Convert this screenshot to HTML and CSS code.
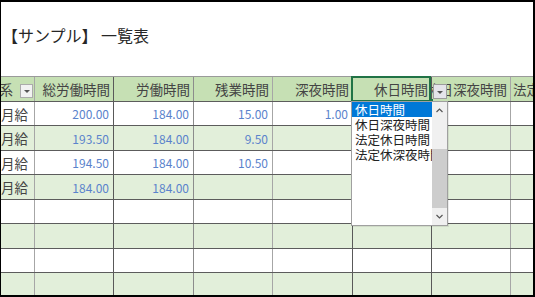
FILE: index.html
```html
<!DOCTYPE html>
<html lang="ja">
<head>
    <meta charset="UTF-8">
    <meta name="viewport" content="width=device-width, initial-scale=1.0">
    <title>【サンプル】 一覧表</title>
    <link rel="stylesheet" href="styles.css">
</head>
<body>
    <div class="sheet">
        <div class="sheet-title">【サンプル】 一覧表</div>

        <div class="grid">
            <!-- header row -->
            <div class="row head">
                <div class="cell first-head">給与体系<span class="drop-btn"></span></div>
                <div class="cell">総労働時間</div>
                <div class="cell">労働時間</div>
                <div class="cell">残業時間</div>
                <div class="cell">深夜時間</div>
                <div class="cell active">
                    休日時間
                    <div class="pick-list">
                        <ul class="pick-options">
                            <li class="picked">休日時間</li>
                            <li>休日深夜時間</li>
                            <li>法定休日時間</li>
                            <li>法定休深夜時間</li>
                        </ul>
                        <div class="pick-scroll">
                            <span class="scroll-arrow">
                                <svg width="7" height="5" viewBox="0 0 7 5"><polyline points="0.5,4 3.5,1 6.5,4" fill="none" stroke="#555" stroke-width="1.2"/></svg>
                            </span>
                            <span class="scroll-gap"></span>
                            <span class="scroll-thumb"></span>
                            <span class="scroll-arrow">
                                <svg width="7" height="5" viewBox="0 0 7 5"><polyline points="0.5,1 3.5,4 6.5,1" fill="none" stroke="#555" stroke-width="1.2"/></svg>
                            </span>
                        </div>
                    </div>
                </div>
                <div class="cell next-head">休日深夜時間<span class="drop-btn"></span></div>
                <div class="cell last-head">法定休日時間</div>
            </div>

            <!-- data rows -->
            <div class="row">
                <div class="cell text">月給</div>
                <div class="cell num">200.00</div>
                <div class="cell num">184.00</div>
                <div class="cell num">15.00</div>
                <div class="cell num">1.00</div>
                <div class="cell"></div>
                <div class="cell"></div>
                <div class="cell"></div>
            </div>
            <div class="row">
                <div class="cell text">月給</div>
                <div class="cell num">193.50</div>
                <div class="cell num">184.00</div>
                <div class="cell num">9.50</div>
                <div class="cell"></div>
                <div class="cell"></div>
                <div class="cell"></div>
                <div class="cell"></div>
            </div>
            <div class="row">
                <div class="cell text">月給</div>
                <div class="cell num">194.50</div>
                <div class="cell num">184.00</div>
                <div class="cell num">10.50</div>
                <div class="cell"></div>
                <div class="cell"></div>
                <div class="cell"></div>
                <div class="cell"></div>
            </div>
            <div class="row">
                <div class="cell text">月給</div>
                <div class="cell num">184.00</div>
                <div class="cell num">184.00</div>
                <div class="cell"></div>
                <div class="cell"></div>
                <div class="cell"></div>
                <div class="cell"></div>
                <div class="cell"></div>
            </div>
            <div class="row">
                <div class="cell"></div><div class="cell"></div><div class="cell"></div><div class="cell"></div>
                <div class="cell"></div><div class="cell"></div><div class="cell"></div><div class="cell"></div>
            </div>
            <div class="row">
                <div class="cell"></div><div class="cell"></div><div class="cell"></div><div class="cell"></div>
                <div class="cell"></div><div class="cell"></div><div class="cell"></div><div class="cell"></div>
            </div>
            <div class="row">
                <div class="cell"></div><div class="cell"></div><div class="cell"></div><div class="cell"></div>
                <div class="cell"></div><div class="cell"></div><div class="cell"></div><div class="cell"></div>
            </div>
            <div class="row">
                <div class="cell"></div><div class="cell"></div><div class="cell"></div><div class="cell"></div>
                <div class="cell"></div><div class="cell"></div><div class="cell"></div><div class="cell"></div>
            </div>
        </div>
    </div>
</body>
</html>
```

FILE: styles.css
```css
* {
    margin: 0;
    padding: 0;
    box-sizing: border-box;
    font-family: "Noto Sans CJK JP", "Noto Sans", sans-serif;
}

body {
    background-color: #fff;
}

.sheet {
    width: 535px;
    height: 297px;
    overflow: hidden;
    border-top: 2px solid #000;
    border-left: 1px solid #000;
    border-right: 2px solid #000;
    border-bottom: 2px solid #000;
    background-color: #fff;
}

.sheet-title {
    height: 74px;
    display: flex;
    align-items: center;
    padding-left: 1px;
    padding-bottom: 8px;
    font-size: 16px;
    color: #262626;
    white-space: nowrap;
}

.grid {
    border-top: 1px solid #9a9a9a;
}

.row {
    display: grid;
    grid-template-columns: 34px 79px 80px 79px 80px 79px 79px 79px;
    height: 24px;
    border-bottom: 1px solid #5c5c5c;
    background-color: #fff;
}

.row:nth-child(odd) {
    background-color: #e2efda;
}

.row:nth-child(3),
.row:nth-child(5),
.row:nth-child(7) {
    height: 25px;
}

.row.head {
    height: 25px;
    background-color: #c6e0b4;
}

.cell {
    position: relative;
    display: flex;
    align-items: center;
    justify-content: flex-end;
    overflow: hidden;
    white-space: nowrap;
    padding: 0 3px;
    border-right: 1px solid #595959;
    font-size: 13.5px;
    color: #444;
}

.cell:nth-child(1),
.cell:nth-child(4),
.cell:nth-child(7) {
    border-right-color: #a6a6a6;
}

.cell:nth-child(3) {
    border-right-color: #8c8c8c;
}

.cell.text {
    justify-content: flex-start;
    padding: 0;
}

.cell.num {
    padding-right: 4px;
    font-size: 12px;
    color: #5a83cc;
}

.first-head {
    padding-right: 21px;
}

.last-head {
    justify-content: flex-start;
    padding-left: 2px;
}

/* dropdown buttons in the header */
.drop-btn {
    position: absolute;
    top: 7px;
    width: 13px;
    height: 15px;
    background-color: #f2f2f2;
    border: 1px solid #ababab;
    display: flex;
    justify-content: center;
    align-items: center;
}

.drop-btn::after {
    content: "";
    border-left: 3px solid transparent;
    border-right: 3px solid transparent;
    border-top: 3px solid #555;
    margin-top: 1px;
}

.first-head .drop-btn {
    right: 1px;
    height: 14px;
}

.next-head .drop-btn {
    left: 1px;
    width: 14px;
    background-color: #e4e4ea;
    border-color: #9c9c9c;
}

/* selected header cell */
.cell.active {
    overflow: visible;
    z-index: 2;
}

.cell.active::after {
    content: "";
    position: absolute;
    left: -2px;
    right: 0;
    top: -1px;
    bottom: -1px;
    border: 2px solid #217346;
}

.cell.active::before {
    content: "";
    position: absolute;
    right: -2px;
    bottom: -2px;
    width: 4px;
    height: 4px;
    background-color: #217346;
    z-index: 3;
}

/* validation list */
.pick-list {
    position: absolute;
    left: -2px;
    top: 24px;
    width: 97px;
    height: 125px;
    display: flex;
    background-color: #fff;
    border: 1px solid #a0a0a0;
    box-shadow: 1px 1px 0 rgba(0, 0, 0, 0.08);
    z-index: 4;
}

.pick-options {
    list-style: none;
    width: 80px;
    overflow: hidden;
}

.pick-options li {
    height: 15px;
    line-height: 15px;
    padding-left: 3px;
    font-size: 12.5px;
    color: #222;
    white-space: nowrap;
    overflow: hidden;
}

.pick-options li.picked {
    background-color: #0078d7;
    color: #fff;
}

.pick-scroll {
    width: 15px;
    display: flex;
    flex-direction: column;
    background-color: #f0f0f0;
}

.scroll-arrow {
    height: 17px;
    display: flex;
    justify-content: center;
    align-items: center;
}

.scroll-gap {
    height: 30px;
}

.scroll-thumb {
    flex: 1;
    background-color: #cdcdcd;
}
```
